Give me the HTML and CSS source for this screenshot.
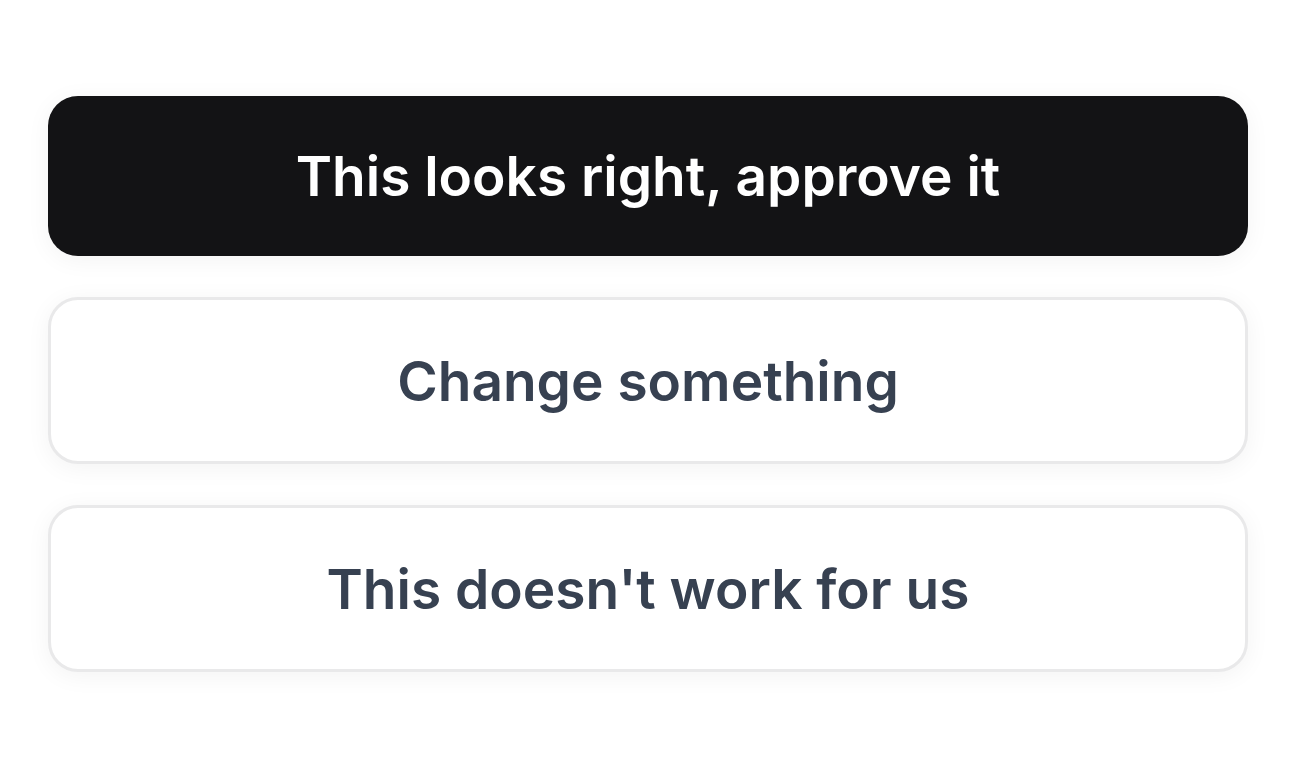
FILE: index.html
```html
<!DOCTYPE html>
<html lang="en">
<head>
    <meta charset="UTF-8">
    <meta name="viewport" content="width=device-width, initial-scale=1.0">
    <title>Review</title>
    <link rel="stylesheet" href="styles.css">
</head>
<body>

<div class="actions">
    <button class="btn btn-primary">This looks right, approve it</button>
    <button class="btn btn-outline">Change something</button>
    <button class="btn btn-outline">This doesn't work for us</button>
</div>

</body>
</html>
```

FILE: styles.css
```css
body {
    margin: 0;
    background: #ffffff;
    font-family: Inter, "Noto Sans", sans-serif;
}
.actions {
    display: flex;
    flex-direction: column;
    gap: 41px;
    padding: 96px 48px;
}
.btn {
    width: 100%;
    border-radius: 30px;
    font-family: inherit;
    font-size: 55px;
    font-weight: 600;
    letter-spacing: 0;
    cursor: pointer;
    box-shadow: 0px 4px 24px rgba(0, 0, 0, 0.05);
}
.btn-primary {
    height: 160px;
    background: #131315;
    color: #ffffff;
    border: none;
}
.btn-outline {
    height: 167px;
    background: #ffffff;
    color: #374151;
    border: 3px solid #e9e9ea;
}
```
